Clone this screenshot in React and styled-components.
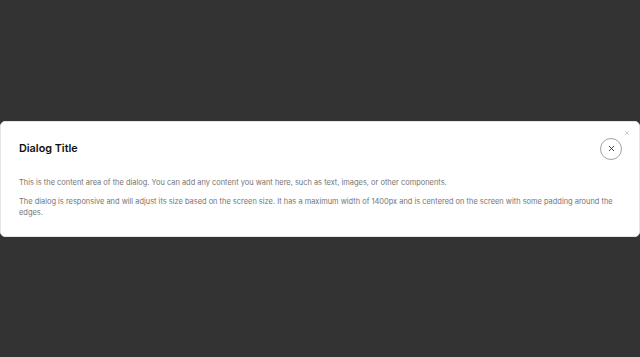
import React from 'react';
import styled, { createGlobalStyle } from 'styled-components';

const GlobalStyle = createGlobalStyle`
  html, body {
    margin: 0;
    padding: 0;
    height: 100%;
  }
  body {
    background: #333333;
    font-family: Inter, "Noto Sans", sans-serif;
  }
  #root {
    height: 100%;
  }
`;

const Overlay = styled.div`
  height: 100vh;
  display: flex;
  align-items: center;
  justify-content: center;
  background: #333333;
`;

const Panel = styled.div`
  position: relative;
  box-sizing: border-box;
  width: 100%;
  max-width: 1400px;
  background: #ffffff;
  border: 1px solid #e6e6e6;
  border-radius: 5px;
  padding: 16px 19px 18px 18px;
`;

const Header = styled.div`
  display: flex;
  align-items: center;
  justify-content: space-between;
`;

const Title = styled.h2`
  margin: 0;
  font-size: 10.8px;
  font-weight: 600;
  color: #111111;
`;

const RoundClose = styled.button`
  box-sizing: border-box;
  width: 22px;
  height: 22px;
  margin-right: -2px;
  border-radius: 50%;
  border: 1px solid #a3a3a3;
  background: #ffffff;
  display: flex;
  align-items: center;
  justify-content: center;
  padding: 0;
  color: #333333;
  cursor: pointer;
`;

const CornerClose = styled.button`
  position: absolute;
  top: 8px;
  right: 9px;
  border: none;
  background: none;
  padding: 0;
  display: flex;
  color: #a8a8a8;
  cursor: pointer;
`;

const Body = styled.div`
  margin-top: 17px;
  display: flex;
  flex-direction: column;
  gap: 8px;
`;

const Text = styled.p`
  margin: 0;
  font-size: 7.45px;
  line-height: 11px;
  color: #747474;
`;

const Cross = ({ size }) => (
  <svg width={size} height={size} viewBox="0 0 24 24" fill="none" stroke="currentColor" strokeWidth="2.4" strokeLinecap="round">
    <path d="M6 6l12 12M18 6L6 18" />
  </svg>
);

export default function App() {
  return (
    <>
      <GlobalStyle />
      <Overlay>
        <Panel>
          <CornerClose aria-label="Close"><Cross size={6} /></CornerClose>
          <Header>
            <Title>Dialog Title</Title>
            <RoundClose aria-label="Close"><Cross size={9} /></RoundClose>
          </Header>
          <Body>
            <Text>This is the content area of the dialog. You can add any content you want here, such as text, images, or other components.</Text>
            <Text>The dialog is responsive and will adjust its size based on the screen size. It has a maximum width of 1400px and is centered on the screen with some padding around the edges.</Text>
          </Body>
        </Panel>
      </Overlay>
    </>
  );
}
